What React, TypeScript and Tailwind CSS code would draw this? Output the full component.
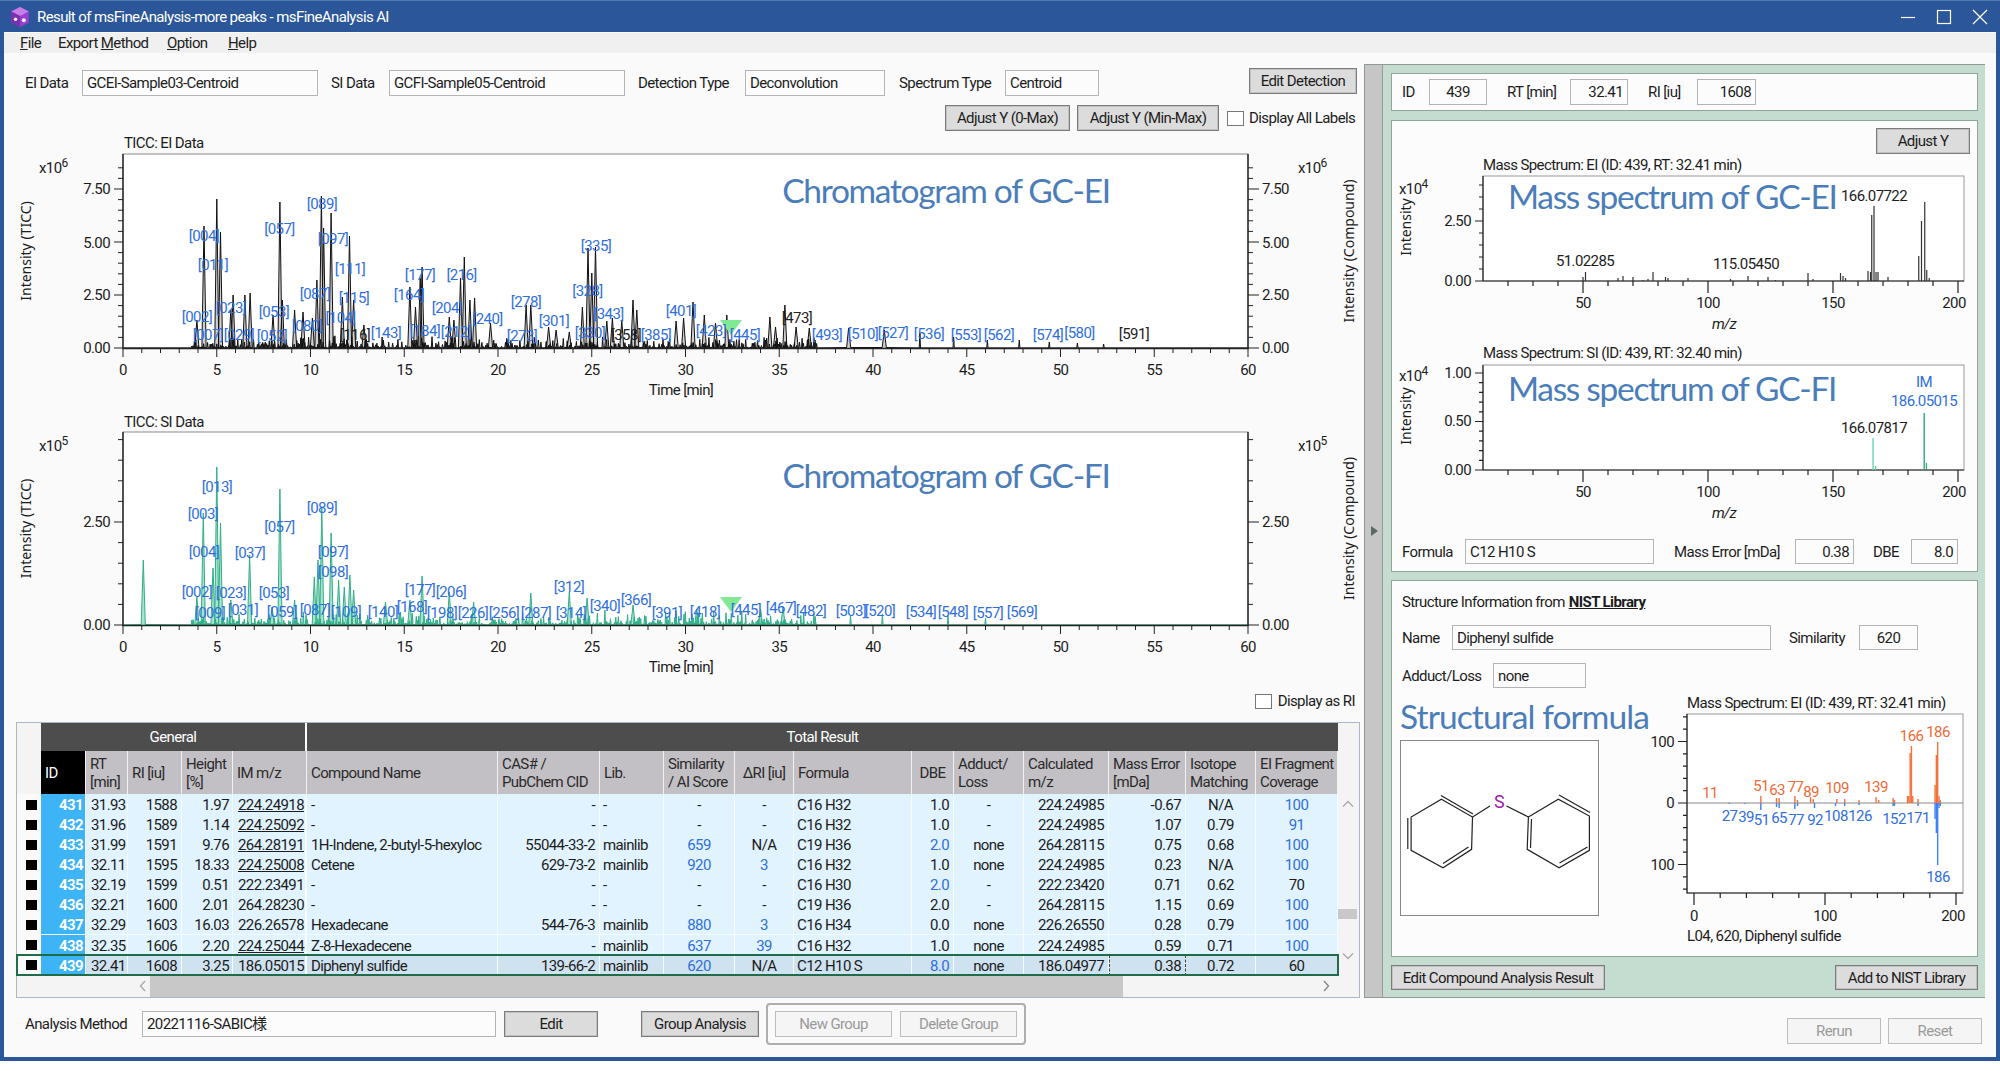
import React from "react";

const rng = (s: number) => () => (s = (s * 16807) % 2147483647) / 2147483647;

const INK = "#1c1c1c";
const BLUE = "#2f6fe0";

function T({ x, y, a = "middle", c = INK, s = 15, i, children }: { x: number; y: number; a?: "start" | "middle" | "end"; c?: string; s?: number; i?: boolean; children: React.ReactNode }) {
  return (
    <text x={x} y={y} textAnchor={a} dominantBaseline="central" fill={c} fontSize={s} fontStyle={i ? "italic" : undefined}>
      {children}
    </text>
  );
}

function Lines({ d, c = "#111", w = 1 }: { d: string; c?: string; w?: number }) {
  return <path d={d} stroke={c} strokeWidth={w} fill="none" />;
}

const xt = (t: number) => 123 + 18.75 * t;

type Peak = [number, number];
type Lab = [string, number, number, number?];

function trace(peaks: Peak[], base: number, seed: number, grass: number, end: number) {
  const r = rng(seed);
  const all: Peak[] = [...peaks];
  for (let t = 3.6; t < end; t += 0.07) {
    const fall = t < 37 ? 1 : 0.35;
    all.push([t, r() * r() * grass * fall]);
  }
  all.sort((a, b) => a[0] - b[0]);
  let d = `M ${xt(0)} ${base} `;
  all.forEach(([t, h]) => {
    const w = h > 15 ? 0.11 : 0.035;
    d += `L ${xt(t - w).toFixed(1)} ${base - (h > 15 ? 0.5 : 0)} L ${xt(t).toFixed(1)} ${(base - h).toFixed(1)} L ${xt(t + w).toFixed(1)} ${base - (h > 15 ? 0.5 : 0)} `;
  });
  return d + `L ${xt(60)} ${base}`;
}

function axisTicks(top: number, base: number, step: number, left: number, right: number, majorEvery: number) {
  let l = "";
  let rr = "";
  for (let n = 0; base - n * step >= top; n++) {
    const y = base - n * step;
    const maj = n % majorEvery === 0;
    l += `M ${left - (maj ? 9 : 5)} ${y} H ${left} `;
    rr += `M ${right} ${y} H ${right + (maj ? 11 : 5)} `;
  }
  return { l, rr };
}

const SANS = "[font-family:'Noto_Sans',sans-serif] tracking-normal";
const NOTE = "[font-family:Lato,sans-serif] tracking-[-1.3px]";

function Chrom({ vy, h, title, titleY, top, base, step, exp, yl, peaks, labels, stroke, fill, grass, seed, end, note, noteY, tri }: {
  vy: number; h: number; title: string; titleY: number; top: number; base: number; step: number; exp: string; yl: [string, number][]; peaks: Peak[]; labels: Lab[]; stroke: string; fill: string; grass: number; seed: number; end: number; note: string; noteY: number; tri: number;
}) {
  const { l, rr } = axisTicks(top + 4, base, step, 123, 1248, 5);
  let xTicks = "";
  for (let i = 0; i <= 60; i++) xTicks += `M ${xt(i)} ${base} V ${base + (i % 5 === 0 ? 9 : 5)} `;
  const d = trace(peaks, base, seed, grass, end);
  const mid = (top + base) / 2;
  return (
    <svg width={1360} height={h} viewBox={`4 ${vy} 1360 ${h}`} className="block shrink-0">
      <T x={124} y={titleY} a="start">{title}</T>
      <rect x={123} y={top} width={1125} height={base - top} fill="#fff" stroke="#8a8a8a" />
      <path d={d + " Z"} fill={fill} stroke="none" />
      <path d={d} fill="none" stroke={stroke} strokeWidth={1} strokeLinejoin="round" />
      <Lines d={`M 123 ${top} V ${base + 0.5} H 1248 V ${top}`} c="#222" w={1.4} />
      <Lines d={l + rr + xTicks} c="#222" />
      <path d={`M ${tri - 11} ${base - 28} h 22 l -11 15 z`} fill="#7fe995" />
      {labels.map(([n, x, y, k], i) => (
        <T key={i} x={x} y={y} c={k ? "#222" : BLUE}>[{n}]</T>
      ))}
      {[0, 5, 10, 15, 20, 25, 30, 35, 40, 45, 50, 55, 60].map((t) => (
        <T key={t} x={xt(t)} y={base + 22}>{t}</T>
      ))}
      <T x={681} y={base + 42}>Time [min]</T>
      {yl.map(([s, y]) => (
        <React.Fragment key={s}>
          <T x={110} y={y} a="end">{s}</T>
          <T x={1262} y={y} a="start">{s}</T>
        </React.Fragment>
      ))}
      <text x={39} y={top + 14} fill={INK} fontSize={15} dominantBaseline="central">x10<tspan dy={-5} fontSize={12}>{exp}</tspan></text>
      <text x={1298} y={top + 14} fill={INK} fontSize={15} dominantBaseline="central">x10<tspan dy={-5} fontSize={12}>{exp}</tspan></text>
      <text x={25} y={mid} fill={INK} fontSize={14} textAnchor="middle" dominantBaseline="central" transform={`rotate(-90 25 ${mid})`} className={SANS}>Intensity (TICC)</text>
      <text x={1348} y={mid} fill={INK} fontSize={14} textAnchor="middle" dominantBaseline="central" transform={`rotate(-90 1348 ${mid})`} className={SANS}>Intensity (Compound)</text>
      <text x={946} y={noteY} fill="#4a7dba" fontSize={33.5} textAnchor="middle" dominantBaseline="central" className={NOTE}>{note}</text>
    </svg>
  );
}

const eiPeaks: Peak[] = [[3.94,28],[4.32,122],[5,149],[5.2,116],[5.75,38],[5.87,53],[6.5,53],[6.78,55],[8,33],[8.37,146],[8.5,48],[9.15,38],[9.6,36],[10.1,30],[10.34,68],[10.58,152],[10.7,120],[11.1,135],[11.7,51],[12.08,112],[12.3,48],[12.85,23],[15.3,61],[15.6,41],[15.85,70],[15.95,81],[17.4,31],[17.65,28],[18,70],[18.2,91],[18.5,48],[18.75,50],[19.6,25],[21.5,43],[21.75,43],[22.7,21],[23.1,18],[23.8,16],[24.5,41],[24.8,100],[25,75],[25.2,101],[25.8,27],[26.1,30],[26.6,27],[27.2,48],[27.4,38],[29.5,27],[29.9,30],[30.4,46],[31,33],[31.6,25],[32.2,33],[34.5,31],[34.8,21],[35.3,43],[35.9,21],[36.6,20],[38.7,20],[40.6,18],[42.5,15],[44.3,11],[46.1,8],[47.8,8],[49.4,6],[50.9,5],[52.3,4]];
const eiLabels: Lab[] = [["004",204,236],["011",213,265],["057",279.5,229],["089",322,204],["097",333,239],["111",350,269],["087",315,294],["115",354,298],["164",409,295],["177",420,275],["216",461.6,275],["204",447,308],["240",487.5,319],["278",526,302],["301",554,321],["328",587.5,291],["335",596,246],["343",608.5,314],["401",681,311],["002",197,317],["023",231,308],["053",274,312],["104",340.6,318],["080",307,326],["007",208,335],["029",239,335],["052",272,336],["116",355,335,1],["143",386,333],["184",425,331],["212",456,332],["273",522,336],["330",590,333],["358",626,335,1],["385",656,335],["423",711,331],["445",745,335],["473",797,318,1],["493",827,335],["510",863,334],["527",893,333],["536",929,334],["553",966,335],["562",999,335],["574",1048,335],["580",1079.5,333],["591",1134,334,1]];

const siPeaks: Peak[] = [[1.08,65],[3.94,28],[4.28,112],[4.8,57],[5,158],[5.2,102],[5.75,25],[6.75,70],[7.95,18],[8.37,136],[9.15,25],[10.2,48],[10.4,65],[10.6,117],[11.1,92],[11.5,45],[11.8,38],[12.1,50],[12.3,35],[14,23],[15.3,25],[15.95,49],[17.4,33],[18.7,23],[21.75,32],[23.8,33],[24.75,27],[25.3,12],[25.7,15],[27.2,20],[29.5,14],[30.6,16],[31.5,14],[33,13],[34,16],[35.2,18],[36.3,13],[38.8,10],[40.5,11],[44,9],[46,7]];
const siLabels: Lab[] = [["013",217,487],["003",203,514],["089",322,508],["057",279.5,527],["004",204,552],["037",250,553],["097",333,552],["098",333,572],["002",197,592],["023",231,593],["053",274,593],["177",420,590],["206",451,592],["312",569,587],["366",636,600],["340",605,606],["168",412,607],["009",210,613],["031",243,610],["059",282,612],["087",315,610],["109",346,612],["140",383,612],["198",442,613],["226",473,613],["256",504,613],["287",536,613],["314",571,613],["391",667,613],["418",705,612],["445",746,610],["467",781,608],["482",811,611],["503",851,611],["520",880,611],["534",921,612],["548",953,612],["557",988,613],["569",1022,612]];

const ms = (m: number) => 1458 + 2.5 * m;

function SpecAxes({ top, base, step, maj, labels, title, titleY }: { top: number; base: number; step: number; maj: number; labels: [string, number][]; title: string; titleY: number }) {
  let ty = "";
  for (let n = 0; base - n * step >= top + 2; n++) ty += `M ${1483 - (n % maj === 0 ? 8 : 4)} ${base - n * step} H 1483 `;
  let tx = "";
  for (let m = 20; m <= 200; m += 10) tx += `M ${ms(m)} ${base} V ${base + (m % 50 === 0 ? 12 : 5)} `;
  return (
    <>
      <T x={1483} y={titleY} a="start">{title}</T>
      <rect x={1483} y={top} width={481} height={base - top} fill="#fff" stroke="#999" />
      <Lines d={`M 1483 ${top} V ${base} H 1964 ${ty} ${tx}`} c="#222" w={1.2} />
      {labels.map(([s, y]) => <T key={s} x={1471} y={y} a="end">{s}</T>)}
      {[50, 100, 150, 200].map((m) => <T key={m} x={m === 200 ? 1954 : ms(m)} y={base + 22}>{m}</T>)}
      <T x={1724} y={base + 43} i>m/z</T>
    </>
  );
}

function Axis10({ y }: { y: number }) {
  return <text x={1399} y={y} fill={INK} fontSize={15} dominantBaseline="central">x10<tspan dy={-5} fontSize={12}>4</tspan></text>;
}

function Spectra() {
  const ei: [number, number, string?][] = [[51,9],[50,4],[64,3],[66,5],[70,4],[74,1],[76,2],[78,9],[83,4],[84,3],[92,3],[109,2],[116,5],[124,4],[127,1],[140,8],[142,2],[153,8],[154,5],[155,3],[164,10],[165,9],[165.5,66],[166.4,75],[167.2,9],[168,9],[172,4],[184.3,25],[185.4,60],[186.7,79],[187.5,11],[188.5,3]];
  return (
    <svg width={585} height={375} viewBox="1392 155 585 375" className="block shrink-0">
      <SpecAxes top={177} base={282} step={12} maj={5} labels={[["2.50", 222], ["0.00", 282]]} title="Mass Spectrum: EI (ID: 439, RT: 32.41 min)" titleY={166} />
      {ei.map(([m, h], i) => <rect key={i} x={ms(m) - 0.6} y={282 - h} width={1.2} height={h} fill="#333" />)}
      <T x={1874} y={197}>166.07722</T>
      <T x={1585} y={262}>51.02285</T>
      <T x={1746} y={265}>115.05450</T>
      <Axis10 y={190} />
      <text x={1405} y={228} fill={INK} fontSize={14} textAnchor="middle" dominantBaseline="central" transform="rotate(-90 1405 228)" className={SANS}>Intensity</text>
      <text x={1508} y={197} fill="#4a7dba" fontSize={33.5} dominantBaseline="central" className={NOTE}>Mass spectrum of GC-EI</text>

      <SpecAxes top={366} base={471} step={9.7} maj={5} labels={[["1.00", 374], ["0.50", 422], ["0.00", 471]]} title="Mass Spectrum: SI (ID: 439, RT: 32.40 min)" titleY={354} />
      <rect x={1872.4} y={439} width={1.3} height={32} fill="#5fd0a8" />
      <rect x={1875} y={467} width={1.3} height={4} fill="#5fd0a8" />
      <rect x={1923.5} y={414} width={1.4} height={57} fill="#2fa583" />
      <rect x={1925.8} y={464} width={1.3} height={7} fill="#2fa583" />
      <T x={1924} y={383} c={BLUE}>IM</T>
      <T x={1924} y={402} c={BLUE}>186.05015</T>
      <T x={1874} y={429}>166.07817</T>
      <Axis10 y={377} />
      <text x={1405} y={417} fill={INK} fontSize={14} textAnchor="middle" dominantBaseline="central" transform="rotate(-90 1405 417)" className={SANS}>Intensity</text>
      <text x={1508} y={389} fill="#4a7dba" fontSize={33.5} dominantBaseline="central" className={NOTE}>Mass spectrum of GC-FI</text>
    </svg>
  );
}

function Mirror() {
  const mx = (m: number) => 1695 + 1.31 * m;
  const up: [number, number][] = [[51,7],[63,5],[65,5],[77,7],[79,3],[89,6],[91,4],[109,4],[115,4],[126,3],[139,6],[141,3],[152,5],[153,3],[163,7],[164,7],[165,50],[166,57],[167,7],[171,4],[184,18],[185,48],[186,61],[187,7],[188,3]];
  const dn: [number, number][] = [[27,1],[39,1],[51,7],[63,4],[65,5],[77,6],[79,3],[92,5],[108,3],[115,3],[126,2],[152,3],[153,3],[171,3],[184,16],[185,30],[186,62],[187,5],[188,3]];
  const ul: [string, number, number][] = [["11",1711,793],["51",1762,786],["63",1778,790],["77",1796.5,787],["89",1812,792],["109",1838,788],["139",1877,787],["166",1912.6,736],["186",1939,732]];
  const bl: [string, number, number][] = [["27",1730.6,816],["39",1747,817],["51",1762.5,820],["65",1780,818],["77",1797,820],["92",1816,820],["108",1837,816],["126",1861,816],["152",1895,819],["171",1919,818],["186",1939,877]];
  let ty = "";
  for (let n = -7; n <= 7; n++) {
    const y = 803 - n * 12.3;
    if (y < 716 || y > 892) continue;
    ty += `M ${1688 - (n % 5 === 0 ? 9 : 4)} ${y} H 1688 `;
  }
  let tx = "";
  for (let m = 0; m <= 200; m += 20) tx += `M ${mx(m)} 893 V ${893 + (m % 100 === 0 ? 12 : 5)} `;
  return (
    <svg width={332} height={258} viewBox="1645 692 332 258" className="block shrink-0">
      <T x={1688} y={703} a="start">Mass Spectrum: EI (ID: 439, RT: 32.41 min)</T>
      <rect x={1688} y={714} width={276} height={179} fill="#fff" stroke="#999" />
      <Lines d="M 1688 803 H 1964" c="#8a8a8a" w={1.2} />
      {up.map(([m, h], i) => <rect key={i} x={mx(m) - 0.7} y={803 - h} width={1.4} height={h} fill="#f4713c" />)}
      {dn.map(([m, h], i) => <rect key={i} x={mx(m) - 0.7} y={803} width={1.4} height={h} fill="#3b82f6" />)}
      <Lines d={`M 1688 714 V 893 H 1964 ${ty} ${tx}`} c="#222" w={1.2} />
      {ul.map(([s, x, y], i) => <T key={i} x={x} y={y} c="#ef6a36">{s}</T>)}
      {bl.map(([s, x, y], i) => <T key={i} x={x} y={y} c={BLUE}>{s}</T>)}
      {[["100", 742], ["0", 803], ["100", 865]].map(([s, y], i) => <T key={i} x={1675} y={Number(y)} a="end">{s}</T>)}
      <T x={1695} y={916}>0</T>
      <T x={1826} y={916}>100</T>
      <T x={1954} y={916}>200</T>
      <T x={1688} y={936} a="start">L04, 620, Diphenyl sulfide</T>
    </svg>
  );
}

function Molecule() {
  return (
    <svg width={198} height={175} viewBox="0 0 198 175" className="block">
      <g stroke="#222" strokeWidth={1.2} fill="none">
        <path d="M40.4 58.3 L71.5 76 L70.6 108.3 L42 126.7 L10.1 109.3 L10.1 76 Z" />
        <path d="M40 54.5 L72 73 M6.8 77 V108 M42 122.5 L67.5 106" />
        <path d="M127.4 76 L157.3 58.3 L188.4 75 V109.3 L158.1 126.7 L126.2 108.3 Z" />
        <path d="M158 54 L189 71.5 M130.5 78 L129.5 107 M158.5 122 L186.5 106" />
        <path d="M71.5 76 L89 65 M105.5 65 L127.4 76" />
      </g>
      <text x={98} y={60} textAnchor="middle" dominantBaseline="central" fontSize={18} fill="#a020a8">S</text>
    </svg>
  );
}

function Box({ w, children, right, center, h = "h-[26px]" }: { w: string; children?: React.ReactNode; right?: boolean; center?: boolean; h?: string }) {
  return (
    <div className={`${w} ${h} shrink-0 flex items-center border border-[#b4b4b4] bg-[#fcfcfc] px-1 text-[#1c1c1c] ${right ? "justify-end" : center ? "justify-center" : ""}`}>
      <span className="whitespace-nowrap">{children}</span>
    </div>
  );
}

function Btn({ w, children, off, h = "h-[26px]" }: { w: string; children: React.ReactNode; off?: boolean; h?: string }) {
  return (
    <div className={`${w} ${h} shrink-0 flex items-center justify-center border whitespace-nowrap ${off ? "border-[#bdbdbd] bg-[#f5f5f5] text-[#9a9a9a]" : "border-[#7b7b7b] bg-[#dcdcdc] text-[#1c1c1c] shadow-[inset_0_0_0_1px_#c2c2c2]"}`}>
      {children}
    </div>
  );
}

function Check() {
  return <span className="inline-block w-[17px] h-[15px] shrink-0 border border-[#777] bg-white" />;
}

const COLS = "grid-cols-[24px_45px_42px_54px_51px_74px_191px_102px_64px_71px_59px_118px_42px_70px_85px_77px_70px_82px]";

const heads: [string, string?][] = [["ID"],["RT","[min]"],["RI [iu]"],["Height","[%]"],["IM m/z"],["Compound Name"],["CAS# /","PubChem CID"],["Lib."],["Similarity","/ AI Score"],["ΔRI [iu]"],["Formula"],["DBE"],["Adduct/","Loss"],["Calculated","m/z"],["Mass Error","[mDa]"],["Isotope","Matching"],["EI Fragment","Coverage"]];

type Row = { id: number; rt: string; ri: string; h: string; mz: string; u?: boolean; name: string; cas: string; lib: string; sim: string; dri: string; f: string; dbe: string; dbeB?: boolean; ad: string; calc: string; err: string; iso: string; cov: string; covB?: boolean };
const rows: Row[] = [
  { id: 431, rt: "31.93", ri: "1588", h: "1.97", mz: "224.24918", u: true, name: "-", cas: "-", lib: "-", sim: "-", dri: "-", f: "C16 H32", dbe: "1.0", ad: "-", calc: "224.24985", err: "-0.67", iso: "N/A", cov: "100", covB: true },
  { id: 432, rt: "31.96", ri: "1589", h: "1.14", mz: "224.25092", u: true, name: "-", cas: "-", lib: "-", sim: "-", dri: "-", f: "C16 H32", dbe: "1.0", ad: "-", calc: "224.24985", err: "1.07", iso: "0.79", cov: "91", covB: true },
  { id: 433, rt: "31.99", ri: "1591", h: "9.76", mz: "264.28191", u: true, name: "1H-Indene, 2-butyl-5-hexyloc", cas: "55044-33-2", lib: "mainlib", sim: "659", dri: "N/A", f: "C19 H36", dbe: "2.0", dbeB: true, ad: "none", calc: "264.28115", err: "0.75", iso: "0.68", cov: "100", covB: true },
  { id: 434, rt: "32.11", ri: "1595", h: "18.33", mz: "224.25008", u: true, name: "Cetene", cas: "629-73-2", lib: "mainlib", sim: "920", dri: "3", f: "C16 H32", dbe: "1.0", ad: "none", calc: "224.24985", err: "0.23", iso: "N/A", cov: "100", covB: true },
  { id: 435, rt: "32.19", ri: "1599", h: "0.51", mz: "222.23491", name: "-", cas: "-", lib: "-", sim: "-", dri: "-", f: "C16 H30", dbe: "2.0", dbeB: true, ad: "-", calc: "222.23420", err: "0.71", iso: "0.62", cov: "70" },
  { id: 436, rt: "32.21", ri: "1600", h: "2.01", mz: "264.28230", name: "-", cas: "-", lib: "-", sim: "-", dri: "-", f: "C19 H36", dbe: "2.0", ad: "-", calc: "264.28115", err: "1.15", iso: "0.69", cov: "100", covB: true },
  { id: 437, rt: "32.29", ri: "1603", h: "16.03", mz: "226.26578", name: "Hexadecane", cas: "544-76-3", lib: "mainlib", sim: "880", dri: "3", f: "C16 H34", dbe: "0.0", ad: "none", calc: "226.26550", err: "0.28", iso: "0.79", cov: "100", covB: true },
  { id: 438, rt: "32.35", ri: "1606", h: "2.20", mz: "224.25044", u: true, name: "Z-8-Hexadecene", cas: "-", lib: "mainlib", sim: "637", dri: "39", f: "C16 H32", dbe: "1.0", ad: "none", calc: "224.24985", err: "0.59", iso: "0.71", cov: "100", covB: true },
  { id: 439, rt: "32.41", ri: "1608", h: "3.25", mz: "186.05015", name: "Diphenyl sulfide", cas: "139-66-2", lib: "mainlib", sim: "620", dri: "N/A", f: "C12 H10 S", dbe: "8.0", dbeB: true, ad: "none", calc: "186.04977", err: "0.38", iso: "0.72", cov: "60" },
];

function Table() {
  return (
    <div className="w-[1344px] h-[276px] ml-[12px] mt-[11px] shrink-0 border border-[#aab8c6] flex bg-[#f4f4f4] leading-[18px]">
      <div className="w-[1321px] shrink-0 flex flex-col">
        <div className="flex h-[28px] shrink-0 pl-[24px] bg-[#f4f4f4]">
          <div className="w-[266px] bg-[#4d4d4d] border-r-2 border-white text-white flex items-center justify-center">General</div>
          <div className="flex-1 bg-[#4d4d4d] text-white flex items-center justify-center">Total Result</div>
        </div>
        <div className={`grid ${COLS} h-[43px] shrink-0`}>
          <div />
          {heads.map(([a, b], i) => (
            <div key={i} className={`flex flex-col justify-center border-r border-[#f2f2f2] px-[4px] whitespace-nowrap overflow-hidden ${i === 0 ? "bg-black text-white" : "bg-[#c2c0c4] text-[#2a2a2a]"} ${i === 9 || i === 11 ? "items-center" : ""}`}>
              <span>{a}</span>
              {b && <span>{b}</span>}
            </div>
          ))}
        </div>
        {rows.map((r) => {
          const sel = r.id === 439;
          const bg = sel ? "bg-[#cfe2f0]" : "bg-[#e0f3fe]";
          const c = `${bg} border-r border-b border-[#f6fbff] pt-[2px] flex items-center whitespace-nowrap overflow-hidden`;
          return (
            <div key={r.id} className={`grid ${COLS} h-[20.08px] shrink-0 ${sel ? "outline-2 outline-[#1f6b4a] -outline-offset-1 relative" : ""}`}>
              <div className="flex items-center justify-center bg-[#fafafa] pl-[5px]"><span className="w-[11px] h-[10px] bg-black" /></div>
              <div className="bg-[#3cb4f5] text-white border-r border-b border-[#f6fbff] pt-[2px] flex items-center justify-end pr-[2px] font-bold">{r.id}</div>
              <div className={`${c} pl-[5px]`}>{r.rt}</div>
              <div className={`${c} justify-end pr-[4px]`}>{r.ri}</div>
              <div className={`${c} justify-end pr-[3px]`}>{r.h}</div>
              <div className={`${c} pl-[5px] border-r-2`}><span className={r.u ? "underline" : ""}>{r.mz}</span></div>
              <div className={`${c} pl-[4px]`}>{r.name}</div>
              <div className={`${c} justify-end pr-[4px]`}>{r.cas}</div>
              <div className={`${c} pl-[3px]`}>{r.lib}</div>
              <div className={`${c} justify-center ${r.sim === "-" ? "" : "text-[#2f6fe0]"}`}>{r.sim}</div>
              <div className={`${c} justify-center ${r.dri === "3" || r.dri === "39" ? "text-[#2f6fe0]" : ""}`}>{r.dri}</div>
              <div className={`${c} pl-[3px]`}>{r.f}</div>
              <div className={`${c} justify-end pr-[4px] ${r.dbeB ? "text-[#2f6fe0]" : ""}`}>{r.dbe}</div>
              <div className={`${c} justify-center`}>{r.ad}</div>
              <div className={`${c} justify-end pr-[4px]`}>{r.calc}</div>
              <div className={`${c} justify-end pr-[4px] ${sel ? "outline outline-dashed outline-[#444] -outline-offset-1" : ""}`}>{r.err}</div>
              <div className={`${c} justify-center`}>{r.iso}</div>
              <div className={`${c} justify-center ${r.covB ? "text-[#2f6fe0]" : ""}`}>{r.cov}</div>
            </div>
          );
        })}
        <div className="flex flex-1 items-center">
          <div className="w-[133px] flex justify-end pr-[3px] text-[#999]">
            <svg width="8" height="12" viewBox="0 0 8 12"><path d="M6 1 L1.5 6 L6 11" stroke="#aaa" strokeWidth="1.4" fill="none" /></svg>
          </div>
          <div className="w-[973px] h-full bg-[#c8c8c8]" />
          <div className="flex-1 flex justify-end pr-[8px]">
            <svg width="8" height="12" viewBox="0 0 8 12"><path d="M2 1 L6.5 6 L2 11" stroke="#888" strokeWidth="1.4" fill="none" /></svg>
          </div>
        </div>
      </div>
      <div className="flex-1 flex flex-col items-stretch pt-[76px]">
        <div className="h-[10px] flex items-center justify-center pr-[2px]"><svg width="12" height="8" viewBox="0 0 12 8"><path d="M1 6.5 L6 1.5 L11 6.5" stroke="#aaa" strokeWidth="1.4" fill="none" /></svg></div>
        <div className="h-[10px] mt-[100px] bg-[#c8c8c8] mr-[2px]" />
        <div className="h-[10px] mt-[32px] flex items-center justify-center pr-[2px]"><svg width="12" height="8" viewBox="0 0 12 8"><path d="M1 1.5 L6 6.5 L11 1.5" stroke="#aaa" strokeWidth="1.4" fill="none" /></svg></div>
      </div>
    </div>
  );
}

function Left() {
  return (
    <div className="w-[1360px] shrink-0 flex flex-col">
      <div className="flex items-start h-[28px] mt-[15px] pl-[21px] pr-[7px]">
        <span className="w-[57px] mt-[5px] shrink-0 whitespace-nowrap">EI Data</span>
        <div className="mt-[2px]"><Box w="w-[236px]">GCEI-Sample03-Centroid</Box></div>
        <span className="w-[58px] ml-[13px] mt-[5px] shrink-0 whitespace-nowrap">SI Data</span>
        <div className="mt-[2px]"><Box w="w-[236px]">GCFI-Sample05-Centroid</Box></div>
        <span className="w-[107px] ml-[13px] mt-[5px] shrink-0 whitespace-nowrap">Detection Type</span>
        <div className="mt-[2px]"><Box w="w-[140px]">Deconvolution</Box></div>
        <span className="w-[106px] ml-[14px] mt-[5px] shrink-0 whitespace-nowrap">Spectrum Type</span>
        <div className="mt-[2px]"><Box w="w-[94px]">Centroid</Box></div>
        <div className="ml-auto"><Btn w="w-[108px]">Edit Detection</Btn></div>
      </div>
      <div className="flex items-center justify-end h-[26px] mt-[9px] pr-[7px]">
        <Btn w="w-[125px]">Adjust Y (0-Max)</Btn>
        <div className="ml-[7px]"><Btn w="w-[142px]">Adjust Y (Min-Max)</Btn></div>
        <div className="ml-[8px] flex items-center gap-[5px] w-[130px]"><Check /><span className="whitespace-nowrap">Display All Labels</span></div>
      </div>
      <div className="mt-[1px]">
        <Chrom vy={132} h={268} title="TICC: EI Data" titleY={143} top={154} base={348} step={10.6} exp="6" yl={[["7.50", 189], ["5.00", 243], ["2.50", 295], ["0.00", 348]]} peaks={eiPeaks} labels={eiLabels} stroke="#111" fill="#cfcfcf" grass={14} seed={97} end={37} note="Chromatogram of GC-EI" noteY={190} tri={731} />
      </div>
      <Chrom vy={400} h={280} title="TICC: SI Data" titleY={422} top={432} base={625} step={20.6} exp="5" yl={[["2.50", 522], ["0.00", 625]]} peaks={siPeaks} labels={siLabels} stroke="#2fae88" fill="#a9e3cd" grass={14} seed={43} end={37} note="Chromatogram of GC-FI" noteY={475} tri={731} />
      <div className="flex items-center justify-end h-[20px] mt-[11px] pr-[9px] gap-[6px]"><Check /><span className="whitespace-nowrap">Display as RI</span></div>
      <Table />
      <div className="flex items-center h-[42px] mt-[5px] pl-[21px]">
        <span className="w-[117px] shrink-0 whitespace-nowrap">Analysis Method</span>
        <Box w="w-[354px]">20221116-SABIC様</Box>
        <div className="ml-[8px]"><Btn w="w-[94px]">Edit</Btn></div>
        <div className="ml-[43px]"><Btn w="w-[118px]">Group Analysis</Btn></div>
        <div className="ml-[7px] w-[260px] h-[42px] border-2 border-[#aeaeae] rounded-[4px] flex items-center gap-[8px] pl-[7px]">
          <Btn w="w-[117px]" off>New Group</Btn>
          <Btn w="w-[117px]" off>Delete Group</Btn>
        </div>
      </div>
    </div>
  );
}

function Panel({ className, children }: { className: string; children: React.ReactNode }) {
  return <div className={`border border-[#8fa69b] bg-[#fcfcfc] shrink-0 ${className}`}>{children}</div>;
}

function Right() {
  return (
    <div className="w-[633px] shrink-0 flex flex-col">
      <div className="flex mt-[11px] h-[934px] shrink-0 mr-[12px] border border-[#8f9a94]">
        <div className="w-[18px] shrink-0 bg-[#c6c6c6] border-r border-[#9a9a9a] flex items-center justify-center">
          <svg width="8" height="10" viewBox="0 0 8 10"><path d="M1 0 L8 5 L1 10 Z" fill="#5a6a66" /></svg>
        </div>
        <div className="flex-1 bg-[#c5dcd0] flex flex-col pl-[8px] pr-[7px]">
          <Panel className="h-[38px] mt-[8px] flex items-center pl-[10px]">
            <span className="w-[27px]">ID</span>
            <Box w="w-[58px]" center>439</Box>
            <span className="ml-[20px] w-[63px] whitespace-nowrap">RT [min]</span>
            <Box w="w-[58px]" right>32.41</Box>
            <span className="ml-[20px] w-[49px] whitespace-nowrap">RI [iu]</span>
            <Box w="w-[59px]" right>1608</Box>
          </Panel>
          <Panel className="h-[452px] mt-[9px] flex flex-col">
            <div className="flex justify-end mt-[7px] pr-[7px]"><Btn w="w-[94px]" h="h-[26px]">Adjust Y</Btn></div>
            <Spectra />
            <div className="flex items-center h-[25px] mt-[10px] pl-[10px]">
              <span className="w-[63px]">Formula</span>
              <Box w="w-[189px]" h="h-[25px]">C12 H10 S</Box>
              <span className="ml-[20px] w-[121px] whitespace-nowrap">Mass Error [mDa]</span>
              <Box w="w-[59px]" h="h-[25px]" right>0.38</Box>
              <span className="ml-[19px] w-[38px]">DBE</span>
              <Box w="w-[47px]" h="h-[25px]" right>8.0</Box>
            </div>
          </Panel>
          <Panel className="h-[377px] mt-[8px] flex flex-col">
            <div className="h-[20px] mt-[11px] pl-[10px] flex items-center whitespace-nowrap">
              Structure Information from <span className="ml-[4px] font-bold underline">NIST Library</span>
            </div>
            <div className="flex items-center h-[25px] mt-[13px] pl-[10px]">
              <span className="w-[50px]">Name</span>
              <Box w="w-[319px]" h="h-[25px]">Diphenyl sulfide</Box>
              <span className="ml-[18px] w-[70px]">Similarity</span>
              <Box w="w-[59px]" h="h-[25px]" center>620</Box>
            </div>
            <div className="flex items-center h-[25px] mt-[13px] pl-[10px]">
              <span className="w-[91px] whitespace-nowrap">Adduct/Loss</span>
              <Box w="w-[93px]" h="h-[25px]">none</Box>
            </div>
            <div className="flex mt-[4px]">
              <div className="w-[252px] shrink-0 flex flex-col pl-[8px]">
                <div className="h-[48px] flex items-center text-[33.5px] leading-[48px] text-[#4a7dba] [font-family:Lato,sans-serif] tracking-[-0.9px] whitespace-nowrap">Structural formula</div>
                <div className="w-[199px] h-[176px] border border-[#888] bg-white"><Molecule /></div>
              </div>
              <Mirror />
            </div>
          </Panel>
          <div className="flex justify-between mt-[8px]">
            <Btn w="w-[214px]" h="h-[25px]">Edit Compound Analysis Result</Btn>
            <Btn w="w-[143px]" h="h-[25px]">Add to NIST Library</Btn>
          </div>
        </div>
      </div>
      <div className="flex justify-end gap-[7px] mt-[20px] pr-[15px]">
        <Btn w="w-[94px]" off>Rerun</Btn>
        <Btn w="w-[94px]" off>Reset</Btn>
      </div>
    </div>
  );
}

export default function App() {
  return (
    <div className="w-[2000px] h-[1071px] overflow-hidden bg-white text-[15px] tracking-[-0.6px] leading-[20px] text-[#1c1c1c] [font-family:'Roboto','Noto_Sans_CJK_JP',sans-serif]">
      <div className="h-[1061px] flex flex-col border-x-[4px] border-b-[4px] border-[#2b579a] bg-[#fafafa]">
        <div className="h-[32px] -mx-[4px] shrink-0 bg-[#2b579a] border-t border-[#4f7bb5] flex items-center pl-[9px] pr-[12px] text-white">
          <svg width="22" height="22" viewBox="0 0 20 20"><path d="M10 1 L18 5 V15 L10 19 L2 15 V5 Z" fill="#9a3fd0" /><path d="M10 1 L18 5 L10 9 L2 5 Z" fill="#c77fe8" /><path d="M10 9 V19 L2 15 V5 Z" fill="#7a2fb0" /><circle cx="6" cy="12" r="1.6" fill="#eee" /><circle cx="13.5" cy="13" r="1.8" fill="#eee" /></svg>
          <span className="ml-[6px] whitespace-nowrap">Result of msFineAnalysis-more peaks - msFineAnalysis AI</span>
          <div className="ml-auto flex items-center gap-[20px]">
            <svg width="16" height="16" viewBox="0 0 16 16"><path d="M1 8.5 H15" stroke="#fff" strokeWidth="1.2" /></svg>
            <svg width="16" height="16" viewBox="0 0 16 16"><rect x="1.5" y="1.5" width="13" height="13" fill="none" stroke="#fff" strokeWidth="1.2" /></svg>
            <svg width="16" height="16" viewBox="0 0 16 16"><path d="M1 1 L15 15 M15 1 L1 15" stroke="#fff" strokeWidth="1.2" /></svg>
          </div>
        </div>
        <div className="h-[21px] shrink-0 bg-[#f0f0f0] border-t border-[#fafafa] flex items-center pl-[16px] text-[#222]">
          <span className="w-[38px]"><u>F</u>ile</span>
          <span className="w-[109px] whitespace-nowrap">Export <u>M</u>ethod</span>
          <span className="w-[61px]"><u>O</u>ption</span>
          <span><u>H</u>elp</span>
        </div>
        <div className="flex flex-1 min-h-0">
          <Left />
          <Right />
        </div>
      </div>
    </div>
  );
}
